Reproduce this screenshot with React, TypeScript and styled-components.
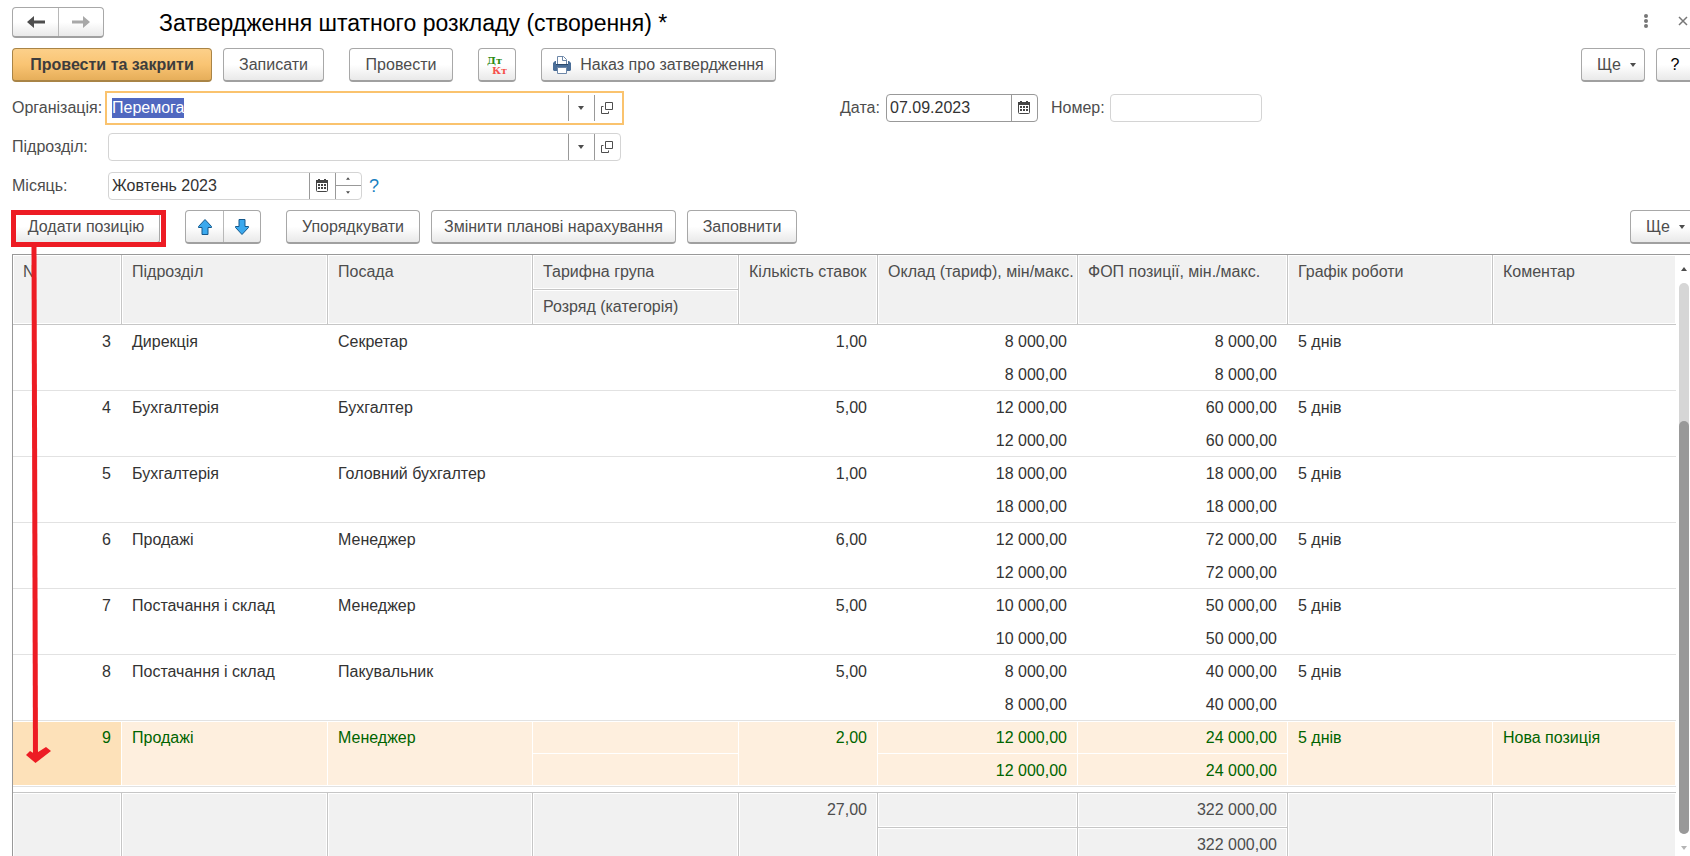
import React from "react";
import styled, { createGlobalStyle, css } from "styled-components";

const Global = createGlobalStyle`
  *, *::before, *::after { box-sizing: border-box; }
  html, body, #root { margin: 0; height: 100%; }
  body {
    overflow: hidden;
    background: #fff;
    color: #4d4d4d;
    font: 16px/20px "Liberation Sans", Arial, sans-serif;
  }
  button, input { font: inherit; color: inherit; margin: 0; }
`;

const Page = styled.main`
  display: flex;
  flex-direction: column;
  height: 100vh;
  padding-left: 12px;
  overflow: hidden;
`;

const TitleBar = styled.header`
  display: flex;
  align-items: center;
  flex: none;
  height: 45px;
`;

const Title = styled.h1`
  flex: 1;
  margin: 0 0 0 55px;
  color: #000;
  font-size: 23px;
  font-weight: 400;
  line-height: 30px;
`;

const PlainButton = styled.button`
  display: flex;
  align-items: center;
  justify-content: center;
  padding: 0;
  border: 0;
  background: none;
`;

const WindowTools = styled.div`
  display: flex;
  gap: 23px;
  margin-bottom: 3px;
  ${PlainButton} { width: 14px; height: 20px; }
`;

const raised = css`
  border: 1px solid #a8a8a8;
  border-bottom: 2px solid #a0a0a0;
  border-radius: 4px;
  background: linear-gradient(#fff 0%, #fff 50%, #e9e9e9 100%);
`;

const Segments = styled.div<{ $item: number; $height: number }>`
  display: flex;
  flex: none;
  height: ${(p) => p.$height}px;
  ${raised}
  ${PlainButton} { width: ${(p) => p.$item}px; }
  ${PlainButton} + ${PlainButton} { border-left: 1px solid #b8b8b8; }
`;

const Button = styled.button<{ $primary?: boolean; $width: number }>`
  display: flex;
  align-items: center;
  justify-content: center;
  flex: none;
  gap: 9px;
  width: ${(p) => p.$width}px;
  height: 34px;
  padding: 0;
  white-space: nowrap;
  ${raised}
  ${(p) =>
    p.$primary &&
    css`
      border-color: #a98446;
      background: linear-gradient(#fcd08a, #f9c473 50%, #e6ae5a);
      color: #3d3d3d;
      font-weight: 700;
    `}
`;

const MoreButton = styled(Button)`
  justify-content: flex-end;
  padding-right: 8px;
`;

const HelpButton = styled(Button)`
  color: #000;
`;

const Toolbar = styled.div`
  display: flex;
  align-items: center;
  flex: none;
  gap: 11px;
  height: 40px;
  margin-right: -4px;
`;

const Gap = styled.span`
  width: 3px;
`;

const Push = styled.span`
  flex: 1;
`;

const Form = styled.form`
  display: grid;
  grid-template-columns: 828px 1fr;
  grid-auto-rows: 39px;
  flex: none;
  align-items: center;
  padding: 3px 0 2px;
`;

const FieldGroup = styled.div`
  display: flex;
  align-items: center;
`;

const Label = styled.label<{ $width: number }>`
  flex: none;
  width: ${(p) => p.$width}px;
`;

const Field = styled.div<{ $width: number; $tone?: "dark" | "focus" }>`
  display: flex;
  flex: none;
  width: ${(p) => p.$width}px;
  height: 28px;
  border: 1px solid ${(p) => (p.$tone === "dark" ? "#999" : "#d4d4d4")};
  border-radius: 4px;
  background: #fff;
  ${(p) =>
    p.$tone === "focus" &&
    css`
      border-color: transparent;
      border-radius: 0;
      outline: 2px solid #fac36e;
      outline-offset: 1px;
    `}
  ${PlainButton} {
    flex: none;
    width: 26px;
    padding-right: 2px;
    border-left: 1px solid #999;
  }
`;

const Input = styled.input`
  flex: 1;
  min-width: 0;
  padding: 0 3px;
  border: 0;
  outline: 0;
  background: none;
  color: #333;
  &::selection { background: #5068c0; color: #fff; }
`;

const Spinner = styled.div`
  display: flex;
  flex-direction: column;
  width: 26px;
  border-left: 1px solid #999;
  ${PlainButton} { flex: 1; width: 25px; border: 0; }
  ${PlainButton} + ${PlainButton} { border-top: 1px solid #999; }
`;

const HelpLink = styled.a`
  margin-left: 7px;
  color: #1a7fc0;
  font-size: 18px;
  text-decoration: none;
`;

const Marked = styled.div`
  position: relative;
  margin-right: 14px;
`;

const MarkFrame = styled.span`
  position: absolute;
  z-index: 2;
  inset: 0 -6px -3px -1px;
  border: 5px solid #ed1c24;
  pointer-events: none;
`;

const MarkArrow = styled.svg`
  position: absolute;
  z-index: 2;
  top: 36px;
  left: 12px;
  pointer-events: none;
`;

const GridArea = styled.section`
  display: flex;
  flex: 1;
  min-height: 0;
  margin-top: 7px;
  border-top: 1px solid #999;
  border-left: 1px solid #999;
  overflow: hidden;
`;

const TableBox = styled.div`
  flex: 1;
  min-width: 0;
  overflow: hidden;
`;

const Table = styled.table`
  width: 100%;
  table-layout: fixed;
  border-collapse: separate;
  border-spacing: 0;
`;

const Cell = styled.td<{ $right?: boolean }>`
  height: 33px;
  padding: 1px 11px 0 10px;
  color: #333;
  text-align: ${(p) => (p.$right ? "right" : "left")};
  vertical-align: top;
  line-height: 31px;
  white-space: nowrap;
  overflow: hidden;
`;

const HeadCell = styled(Cell)`
  height: 35px;
  padding: 0 10px;
  border-right: 1px solid #c6c6c6;
  border-bottom: 1px solid #c6c6c6;
  background: #f1f1f1;
  box-shadow: inset 0 0 0 1px #fff;
  color: #4d4d4d;
  font-weight: 400;
  line-height: 34px;
  &:last-child { border-right: 0; }
  tr + tr > &:last-child { border-right: 1px solid #c6c6c6; }
  tr + tr > &[rowspan]:last-child { border-right: 0; }
`;

const Row = styled.tr<{ $last?: boolean }>`
  ${Cell} { border-bottom: ${(p) => (p.$last ? "1px solid #e2e2e2" : "0")}; }
  ${Cell}[rowspan] { border-bottom: 1px solid #e2e2e2; }
`;

const NewRow = styled(Row)`
  ${Cell} {
    background: #feefde;
    box-shadow: inset -1px 0 #fff, inset 0 ${(p) => (p.$last ? -1 : 1)}px #fff;
    color: #006400;
  }
  ${Cell}[rowspan] { box-shadow: inset -1px 0 #fff, inset 0 1px #fff, inset 0 -1px #fff; }
  ${Cell}.split { box-shadow: inset -1px -1px #fff, inset 0 1px #fff; }
  ${Cell}:first-child[rowspan="2"].number { background: #fde1b9; }
`;

const FootGap = styled.td`
  height: 6px;
  padding: 0;
  border-bottom: 1px solid #c6c6c6;
`;

const ScrollBar = styled.div`
  display: flex;
  flex-direction: column;
  align-items: center;
  flex: none;
  width: 14px;
  padding: 12px 0 6px 2px;
`;

const Track = styled.div`
  display: flex;
  flex: 1;
  align-items: flex-end;
  width: 10px;
  margin: 12px 0;
  border-radius: 5px;
  background: #d6d6d6;
`;

const Thumb = styled.div`
  width: 100%;
  height: 75%;
  border-radius: 5px;
  background: #999;
`;

const NavArrow = ({ right = false }) => (
  <svg width="18" height="12" viewBox="0 0 18 12" aria-hidden="true">
    <path
      d={right ? "M18 6 11 0v4.500H0v3h11V12z" : "M0 6l7-6v4.500h11v3H7V12z"}
      fill={right ? "#a8a8a8" : "#4d4d4d"}
    />
  </svg>
);

const BlueArrow = ({ down = false }) => (
  <svg width="16" height="18" viewBox="0 0 16 18" aria-hidden="true">
    <path
      d={
        down
          ? "M8 16.500 1.500 9.500V8.500H5V1.500H11V8.500H14.500V9.500Z"
          : "M8 1.500 14.500 8.500V9.500H11V16.500H5V9.500H1.500V8.500Z"
      }
      fill="#3ba9ee"
      stroke="#14588c"
      strokeLinejoin="round"
    />
  </svg>
);

const Caret = ({ up = false, size = 6, color = "#4d4d4d" }) => (
  <svg width={size} height={size / 2 + 1} viewBox="0 0 6 4" aria-hidden="true">
    <path d={up ? "M0 4h6L3 0z" : "M0 0h6L3 4z"} fill={color} />
  </svg>
);

const OpenIcon = () => (
  <svg width="12" height="12" viewBox="0 0 12 12" fill="none" stroke="#4d4d4d" aria-hidden="true">
    <path d="M4.500 .5h7v7h-7zM2.500 4.500h-2v7h7v-2" />
  </svg>
);

const CalendarIcon = () => (
  <svg width="12" height="13" viewBox="0 0 12 13" aria-hidden="true">
    <rect x=".5" y="1.500" width="11" height="11" rx="1" fill="#fff" stroke="#444" />
    <path d="M0 1h2V0h2v1h4V0h2v1h2v3H0z" fill="#444" />
    <path d="M2 5h2v2H2zM5 5h2v2H5zM8 5h2v2H8zM2 8h2v2H2zM5 8h2v2H5zM8 8h2v2H8z" fill="#444" />
  </svg>
);

const PrinterIcon = () => (
  <svg width="18" height="18" viewBox="0 0 18 18" aria-hidden="true">
    <path d="M4.500 8V.5h6l3 3V8" fill="#fff" stroke="#6d87a8" />
    <path d="M9.500 .5v4h4" fill="none" stroke="#6d87a8" />
    <path d="M2 5h1v3h12V5h1l2 2v7l-1 1H1l-1-1V7z" fill="#4a6e98" />
    <path d="M3 8.500h12" stroke="#2d4a6c" />
    <path d="M4.500 11.500h9v6h-9z" fill="#fff" stroke="#6d87a8" />
  </svg>
);

const DtKtIcon = () => (
  <svg width="20" height="20" viewBox="0 0 20 20" fontFamily="DejaVu Serif, serif" fontWeight="700" fontSize="10" aria-hidden="true">
    <text x="0" y="9" fill="#2c8a12">Дт</text>
    <text x="5" y="19" fill="#f5504c">Кт</text>
  </svg>
);

const columns = [109, 206, 205, 206, 139, 200, 210, 205];

const positions = [
  { n: 3, unit: "Дирекція", post: "Секретар", count: "1,00", salary: "8 000,00", fund: "8 000,00" },
  { n: 4, unit: "Бухгалтерія", post: "Бухгалтер", count: "5,00", salary: "12 000,00", fund: "60 000,00" },
  { n: 5, unit: "Бухгалтерія", post: "Головний бухгалтер", count: "1,00", salary: "18 000,00", fund: "18 000,00" },
  { n: 6, unit: "Продажі", post: "Менеджер", count: "6,00", salary: "12 000,00", fund: "72 000,00" },
  { n: 7, unit: "Постачання і склад", post: "Менеджер", count: "5,00", salary: "10 000,00", fund: "50 000,00" },
  { n: 8, unit: "Постачання і склад", post: "Пакувальник", count: "5,00", salary: "8 000,00", fund: "40 000,00" },
  { n: 9, unit: "Продажі", post: "Менеджер", count: "2,00", salary: "12 000,00", fund: "24 000,00", note: "Нова позиція" },
];

const PositionRows = ({ item }: { item: (typeof positions)[number] }) => {
  const Line = item.note ? NewRow : Row;
  return (
    <>
      <Line>
        <Cell className="number" rowSpan={2} $right>{item.n}</Cell>
        <Cell rowSpan={2}>{item.unit}</Cell>
        <Cell rowSpan={2}>{item.post}</Cell>
        <Cell className="split" />
        <Cell rowSpan={2} $right>{item.count}</Cell>
        <Cell className="split" $right>{item.salary}</Cell>
        <Cell className="split" $right>{item.fund}</Cell>
        <Cell rowSpan={2}>5 днів</Cell>
        <Cell rowSpan={2}>{item.note}</Cell>
      </Line>
      <Line $last>
        <Cell />
        <Cell $right>{item.salary}</Cell>
        <Cell $right>{item.fund}</Cell>
      </Line>
    </>
  );
};

export default function App() {
  const selectName = (event: React.FocusEvent<HTMLInputElement>) => event.currentTarget.select();
  return (
    <Page>
      <Global />
      <TitleBar>
        <Segments $item={45} $height={31}>
          <PlainButton aria-label="Назад"><NavArrow /></PlainButton>
          <PlainButton aria-label="Вперед"><NavArrow right /></PlainButton>
        </Segments>
        <Title>Затвердження штатного розкладу (створення) *</Title>
        <WindowTools>
          <PlainButton aria-label="Меню">
            <svg width="4" height="14" viewBox="0 0 4 14" fill="#777">
              <circle cx="2" cy="2" r="2" /><circle cx="2" cy="7" r="2" /><circle cx="2" cy="12" r="2" />
            </svg>
          </PlainButton>
          <PlainButton aria-label="Закрити">
            <svg width="10" height="10" viewBox="0 0 10 10" stroke="#777" strokeWidth="1.500">
              <path d="M1 1l8 8M9 1 1 9" />
            </svg>
          </PlainButton>
        </WindowTools>
      </TitleBar>

      <Toolbar>
        <Button $width={200} $primary>Провести та закрити</Button>
        <Button $width={101}>Записати</Button>
        <Gap />
        <Button $width={104}>Провести</Button>
        <Gap />
        <Button $width={38} aria-label="Дт Кт"><DtKtIcon /></Button>
        <Gap />
        <Button $width={235}><PrinterIcon />Наказ про затвердження</Button>
        <Push />
        <MoreButton $width={64}>Ще <Caret /></MoreButton>
        <HelpButton $width={38}>?</HelpButton>
      </Toolbar>

      <Form onSubmit={(e) => e.preventDefault()}>
        <FieldGroup>
          <Label htmlFor="org" $width={96}>Організація:</Label>
          <Field $width={513} $tone="focus">
            <Input id="org" defaultValue="Перемога" autoFocus onFocus={selectName} />
            <PlainButton type="button" aria-label="Вибрати"><Caret /></PlainButton>
            <PlainButton type="button" aria-label="Відкрити"><OpenIcon /></PlainButton>
          </Field>
        </FieldGroup>
        <FieldGroup>
          <Label htmlFor="date" $width={46}>Дата:</Label>
          <Field $width={152} $tone="dark">
            <Input id="date" defaultValue="07.09.2023" />
            <PlainButton type="button" aria-label="Календар"><CalendarIcon /></PlainButton>
          </Field>
          <Label as="span" $width={13} />
          <Label htmlFor="number" $width={59}>Номер:</Label>
          <Field $width={152}><Input id="number" /></Field>
        </FieldGroup>
        <FieldGroup>
          <Label htmlFor="unit" $width={96}>Підрозділ:</Label>
          <Field $width={513}>
            <Input id="unit" />
            <PlainButton type="button" aria-label="Вибрати"><Caret /></PlainButton>
            <PlainButton type="button" aria-label="Відкрити"><OpenIcon /></PlainButton>
          </Field>
        </FieldGroup>
        <span />
        <FieldGroup>
          <Label htmlFor="month" $width={96}>Місяць:</Label>
          <Field $width={254}>
            <Input id="month" defaultValue="Жовтень 2023" />
            <PlainButton type="button" aria-label="Календар"><CalendarIcon /></PlainButton>
            <Spinner>
              <PlainButton type="button" aria-label="Більше"><Caret up size={4} /></PlainButton>
              <PlainButton type="button" aria-label="Менше"><Caret size={4} /></PlainButton>
            </Spinner>
          </Field>
          <HelpLink href="#help">?</HelpLink>
        </FieldGroup>
      </Form>

      <Toolbar>
        <Marked>
          <Button $width={148}>Додати позицію</Button>
          <MarkFrame />
          <MarkArrow width="30" height="520" viewBox="0 0 30 520" aria-hidden="true">
            <path d="M10 0 11.500 510" stroke="#ed1c24" strokeWidth="5" />
            <path d="M2 509 6 505 11 508 22 501 27 505 11.500 517z" fill="#ed1c24" />
          </MarkArrow>
        </Marked>
        <Segments $item={37} $height={34}>
          <PlainButton aria-label="Вгору"><BlueArrow /></PlainButton>
          <PlainButton aria-label="Вниз"><BlueArrow down /></PlainButton>
        </Segments>
        <Gap />
        <Button $width={134}>Упорядкувати</Button>
        <Button $width={245}>Змінити планові нарахування</Button>
        <Button $width={110}>Заповнити</Button>
        <Push />
        <MoreButton $width={64}>Ще <Caret /></MoreButton>
      </Toolbar>

      <GridArea>
        <TableBox>
          <Table>
            <colgroup>
              {columns.map((width, i) => <col key={i} width={width} />)}
              <col />
            </colgroup>
            <thead>
              <tr>
                <HeadCell as="th" rowSpan={2}>N</HeadCell>
                <HeadCell as="th" rowSpan={2}>Підрозділ</HeadCell>
                <HeadCell as="th" rowSpan={2}>Посада</HeadCell>
                <HeadCell as="th">Тарифна група</HeadCell>
                <HeadCell as="th" rowSpan={2}>Кількість ставок</HeadCell>
                <HeadCell as="th" rowSpan={2}>Оклад (тариф), мін/макс.</HeadCell>
                <HeadCell as="th" rowSpan={2}>ФОП позиції, мін./макс.</HeadCell>
                <HeadCell as="th" rowSpan={2}>Графік роботи</HeadCell>
                <HeadCell as="th" rowSpan={2}>Коментар</HeadCell>
              </tr>
              <tr><HeadCell as="th">Розряд (категорія)</HeadCell></tr>
            </thead>
            <tbody>
              {positions.map((item) => <PositionRows key={item.n} item={item} />)}
            </tbody>
            <tfoot>
              <tr><FootGap colSpan={9} /></tr>
              <tr>
                <HeadCell rowSpan={2} />
                <HeadCell rowSpan={2} />
                <HeadCell rowSpan={2} />
                <HeadCell rowSpan={2} />
                <HeadCell rowSpan={2} $right>27,00</HeadCell>
                <HeadCell />
                <HeadCell $right>322 000,00</HeadCell>
                <HeadCell rowSpan={2} />
                <HeadCell rowSpan={2} />
              </tr>
              <tr>
                <HeadCell />
                <HeadCell $right>322 000,00</HeadCell>
              </tr>
            </tfoot>
          </Table>
        </TableBox>
        <ScrollBar aria-hidden="true">
          <Caret up />
          <Track><Thumb /></Track>
          <Caret color="#b5b5b5" />
        </ScrollBar>
      </GridArea>
    </Page>
  );
}
